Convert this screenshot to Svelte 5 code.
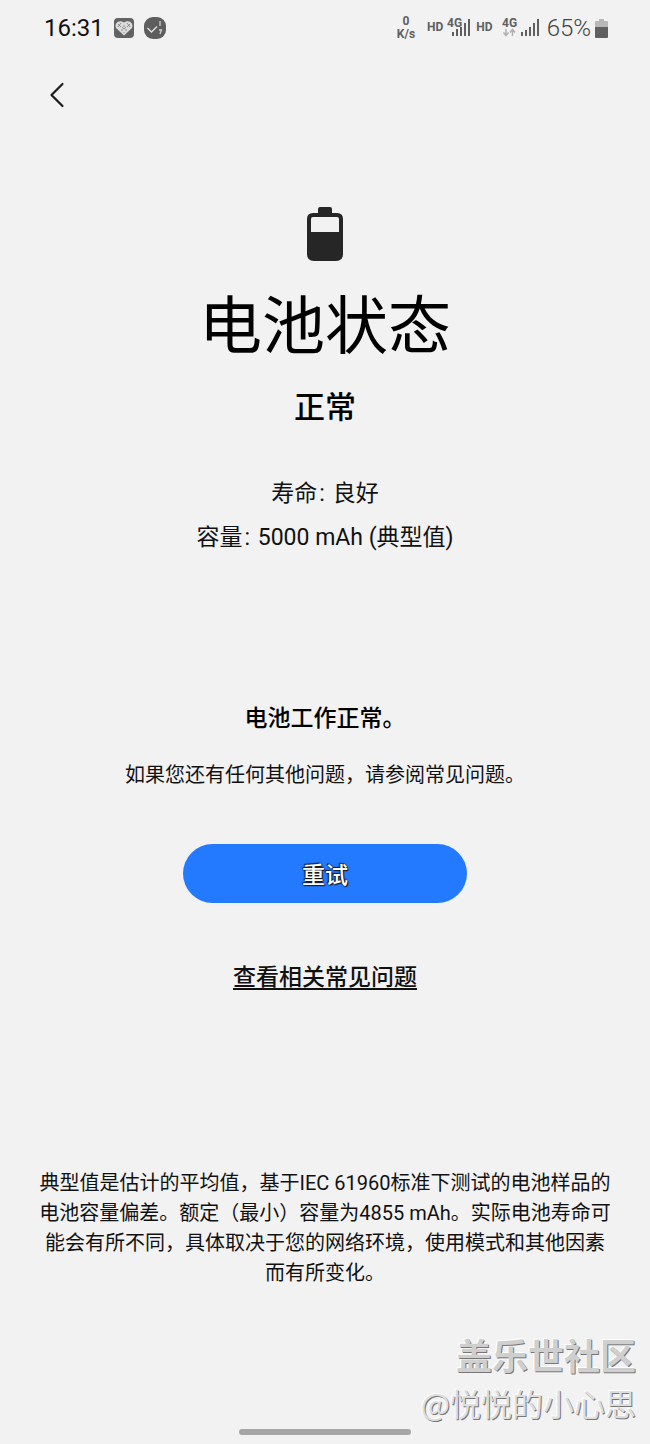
<script>
  let time = '16:31';
  let battery = 65;

  const info = [
    { label: '寿命', value: '良好' },
    { label: '容量', value: '5000 mAh (典型值)' }
  ];

  function goBack() {
    window.history.back();
  }
</script>

<div class="screen" lang="zh-CN">
  <header class="status">
    <span class="time">{time}</span>
    <svg class="app-icon" width="20" height="20" viewBox="0 0 20 20">
      <rect width="20" height="20" rx="4" fill="#636363" />
      <path d="M10 17.500 L2 10 C0 5 5 1 10 4.500 C15 1 20 5 18 10 Z" fill="#dcdcdc" />
      <path d="M4 6l3 3M7 5l-3 4M8 9l2 2 2-2M13 5l3 4M16 6l-3 3M10 7v2M7 12h2M11 12h2M10 14v1" stroke="#777" stroke-width="0.8" fill="none" />
    </svg>
    <svg class="app-icon" width="22" height="22" viewBox="0 0 22 22">
      <rect width="22" height="22" rx="9" fill="#5e5e5e" />
      <path d="M3.500 11l4 4 5.500-5.500" stroke="#e4e4e4" stroke-width="1.300" fill="none" />
      <path d="M16 4v5M15 13h2.500l-1.500 4" stroke="#d0d0d0" stroke-width="1.300" fill="none" />
    </svg>
    <span class="space"></span>
    <span class="speed"><span>0</span><span>K/s</span></span>
    <span class="hd">HD</span>
    <svg class="sim-one" width="23" height="24" viewBox="0 0 23 24">
      <text x="0" y="11" font-size="12" font-weight="700" fill="#606060">4G</text>
      <path d="M6 20v-4M10 20v-7M14 20v-9M18 20V7M22 20V3" stroke="#f2f2f2" stroke-width="4" opacity="0.4" />
      <path d="M6 20v-4M10 20v-7M14 20v-9M18 20V7M22 20V3" stroke="#606060" stroke-width="2" />
    </svg>
    <span class="hd">HD</span>
    <svg class="sim-two" width="37" height="24" viewBox="0 0 37 24">
      <text x="0" y="11" font-size="12" font-weight="700" fill="#606060">4G</text>
      <path d="M4 13v6M1.500 16.500l2.500 3 2.500-3M10.500 20v-6M8 16.500l2.500-3 2.500 3" stroke="#b0b0b0" stroke-width="1.500" fill="none" />
      <path d="M20 20v-4M24 20v-6M28 20v-9M32 20V7M36 20V3" stroke="#606060" stroke-width="2" />
    </svg>
    <span class="percent">{battery}%</span>
    <svg width="13" height="19" viewBox="0 0 13 19">
      <path d="M4 0h5v2h3q1 0 1 1v6H0V3q0-1 1-1h3z" fill="#b8b8b8" />
      <path d="M0 8h13v10q0 1-1 1H1q-1 0-1-1z" fill="#606060" />
    </svg>
  </header>

  <nav>
    <button class="back" aria-label="返回" on:click={goBack}>
      <svg width="16" height="26" viewBox="0 0 16 26">
        <path d="M13.500 2L2.500 13l11 11" stroke="#1c1c1c" stroke-width="2.200" stroke-linecap="round" stroke-linejoin="round" fill="none" />
      </svg>
    </button>
  </nav>

  <main>
    <svg class="battery" width="36" height="54" viewBox="0 0 36 54">
      <path fill-rule="evenodd" fill="#262626" d="M13 0h10q2 0 2 2v4h5q6 0 6 6v35q0 7-7 7H7q-7 0-7-7V12q0-6 6-6h5V2q0-2 2-2zM6 10q-2 0-2 2v13h28V12q0-2-2-2z" />
    </svg>
    <h1>电池状态</h1>
    <p class="state">正常</p>

    <div class="info">
      {#each info as item}
        <p>{item.label}<span class="colon">:</span> {item.value}</p>
      {/each}
    </div>

    <h2>电池工作正常。</h2>
    <p class="hint">如果您还有任何其他问题，请参阅常见问题。</p>
    <button class="retry">重试</button>
    <a class="faq" href="#faq">查看相关常见问题</a>

    <p class="note">典型值是估计的平均值，基于IEC 61960标准下测试的电池样品的电池容量偏差。额定（最小）容量为4855 mAh。实际电池寿命可能会有所不同，具体取决于您的网络环境，使用模式和其他因素而有所变化。</p>
  </main>

  <footer>
    <div class="mark">
      <span class="site">盖乐世社区</span>
      <span class="author">@悦悦的小心思</span>
    </div>
    <div class="home"></div>
  </footer>
</div>

<style>
  :global(body) {
    background: #f2f2f2;
  }

  .screen {
    display: flex;
    flex-direction: column;
    min-height: 100vh;
    background: #f2f2f2;
    color: #111;
    font-family: Roboto, "Noto Sans CJK SC", sans-serif;
  }

  h1, h2, p {
    margin: 0;
    font-weight: 400;
  }

  .status {
    display: flex;
    align-items: center;
    height: 56px;
    padding: 0 42px 0 44px;
    color: #606060;
  }

  .time {
    margin-right: 10px;
    font-size: 24px;
    color: #111;
  }

  .app-icon {
    margin-right: 10px;
  }

  .space {
    flex: 1;
  }

  .speed {
    display: flex;
    flex-direction: column;
    align-items: center;
    margin-right: 12px;
    font-size: 12px;
    line-height: 13px;
    font-weight: 700;
  }

  .hd {
    margin-top: -2px;
    font-size: 12px;
    font-weight: 700;
  }

  .sim-one {
    margin: 0 6px 0 4px;
  }

  .sim-two {
    margin: 0 8px 0 9px;
  }

  .percent {
    margin-right: 4px;
    font-size: 24px;
    font-weight: 300;
    color: #444;
  }

  nav {
    display: flex;
    padding: 15px 33px;
  }

  .back {
    display: flex;
    align-items: center;
    justify-content: center;
    width: 48px;
    height: 48px;
    padding: 0;
    border: 0;
    background: none;
    cursor: pointer;
  }

  main {
    display: flex;
    flex-direction: column;
    align-items: center;
    flex: 1;
    padding: 73px 36px 0;
    text-align: center;
  }

  h1 {
    margin-top: 26px;
    font-size: 63px;
    line-height: 80px;
    color: #000;
  }

  .state {
    margin-top: 19px;
    font-size: 31px;
    line-height: 44px;
    font-weight: 500;
    color: #000;
  }

  .info {
    margin-top: 42px;
    font-size: 23px;
    line-height: 44px;
  }

  .colon {
    padding: 0 2px;
  }

  h2 {
    margin-top: 143px;
    font-size: 23px;
    line-height: 32px;
    font-weight: 500;
    color: #000;
  }

  .hint {
    margin-top: 25px;
    font-size: 20px;
    line-height: 30px;
  }

  .retry {
    width: 100%;
    max-width: 284px;
    height: 59px;
    margin-top: 54px;
    padding: 0 0 2px;
    border: 0;
    border-radius: 30px;
    background: #237aff;
    color: #fff;
    font-family: inherit;
    font-size: 23px;
    font-weight: 500;
    text-shadow: 0 0 2px #000, 1px 1px 1px #222, -1px -1px 1px #223;
    cursor: pointer;
  }

  .faq {
    margin-top: 59px;
    font-size: 23px;
    line-height: 32px;
    font-weight: 500;
    color: #111;
    text-underline-offset: 3px;
    text-decoration-thickness: 2px;
  }

  .note {
    margin-top: 174px;
    font-size: 20px;
    line-height: 30px;
  }

  footer {
    display: flex;
    flex-direction: column;
    align-items: center;
    padding: 36px 14px 9px;
  }

  .mark {
    display: flex;
    flex-direction: column;
    align-items: flex-end;
    align-self: flex-end;
    margin-bottom: 4px;
    font-family: "Noto Sans CJK SC", sans-serif;
    color: #cfcfcf;
    text-shadow: 1px 1px 0 #777, -1px -1px 0 #fff;
  }

  .site {
    font-size: 36px;
    line-height: 54px;
    font-weight: 700;
  }

  .author {
    font-size: 31px;
    line-height: 44px;
    color: #dedede;
  }

  .home {
    width: 172px;
    height: 6px;
    border-radius: 3px;
    background: #a6a6a6;
  }
</style>
